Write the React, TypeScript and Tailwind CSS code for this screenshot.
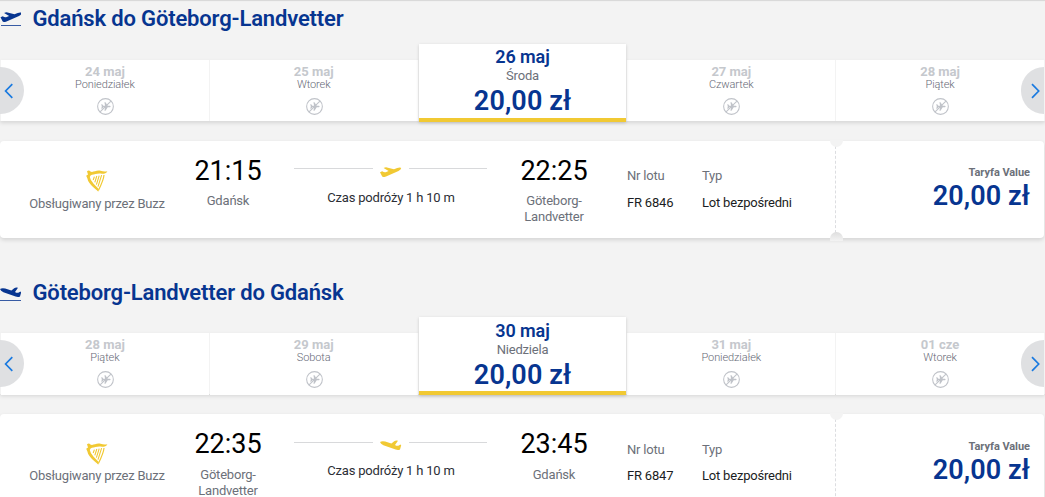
import React from 'react';

interface Day {
  date: string;
  weekday: string;
  price?: string;
}

interface Flight {
  departTime: string;
  departCity: string;
  arriveTime: string;
  arriveCity: string;
  number: string;
}

interface JourneyProps {
  title: string;
  inbound?: boolean;
  days: Day[];
  flight: Flight;
}

const outboundDays: Day[] = [
  { date: '24 maj', weekday: 'Poniedziałek' },
  { date: '25 maj', weekday: 'Wtorek' },
  { date: '26 maj', weekday: 'Środa', price: '20,00 zł' },
  { date: '27 maj', weekday: 'Czwartek' },
  { date: '28 maj', weekday: 'Piątek' },
];

const inboundDays: Day[] = [
  { date: '28 maj', weekday: 'Piątek' },
  { date: '29 maj', weekday: 'Sobota' },
  { date: '30 maj', weekday: 'Niedziela', price: '20,00 zł' },
  { date: '31 maj', weekday: 'Poniedziałek' },
  { date: '01 cze', weekday: 'Wtorek' },
];

const TakeoffPlane = () => (
  <path d="M0 5.2 L2.2 4.3 Q4.5 5.9 6.2 5 L8.6 4 L3.6 .9 Q5.6 0 7 .4 L14 2.3 L17.2 .9 Q20.6 -.1 21.2 1 Q21.2 2.4 18.5 3.9 L6 9.4 Q3 10.5 2.2 9.6 Z" />
);

const LandingPlane = () => (
  <path d="M0 2 Q2 .8 5.2 1.6 L11.4 3.5 L14.2 1.2 Q16 0 18 .8 L15 4.9 Q17.2 6.4 18.8 5.4 L20.4 4.6 L21.2 5.3 L20 9.4 Q18.4 10.4 15.6 9.6 L3.4 5.3 Q.6 4 0 2 Z" />
);

const RouteIcon = ({ inbound }: { inbound?: boolean }) => (
  <svg className="w-[21px] h-[16px] shrink-0 text-[#073590]" viewBox="0 0 21 16" fill="currentColor">
    {inbound ? <LandingPlane /> : <g transform="translate(.5 0)"><TakeoffPlane /></g>}
    <path d={inbound ? 'M0 13h21v1H0z' : 'M1 13h20v1H1z'} opacity=".8" />
  </svg>
);

const NoFlightIcon = () => (
  <svg className="w-[17px] h-[17px]" viewBox="0 0 16 16" fill="none" stroke="#c0c3c9">
    <circle cx="8" cy="8" r="7.4" />
    <path d="M2.9 13.1 13.1 2.9" />
    <path d="M4 5.9h.9l1.1 1.4h1.6L7 4h1l2.1 3.3h2.2q1.2.7 0 1.3H10.1L8 12H7l.6-3.4H6L4.9 10H4l.5-2z" fill="#c0c3c9" stroke="none" />
  </svg>
);

const HarpIcon = () => (
  <svg className="w-[22px] h-[22px]" viewBox="0 0 22 22" fill="none" stroke="#f1c933">
    <path d="M1 1.3 Q3-.3 4.4 1.5 C7 3 10-.2 14.5.8 Q18 1.8 21.4 1.2 Q20 3.8 16 3.8 C12 2.8 9 4.4 6 4.8 Q4.2 5.4 3.8 7 Q4.4 10.5 7.6 13.8 L12.5 18.8 L12.3 21.8 C9 18 2.5 14.6 1.4 8.6 L.2 5.8 L2 4.4 Z" fill="#f1c933" stroke="none" />
    <path d="M18 5 Q17.6 10 12.4 20.4" strokeWidth="1.2" />
    <path d="M8.4 6.6 7.2 10M10.8 6 8.8 12.4M13.2 5.6 10.4 14.6M15.6 5.2 12 16.6" strokeWidth="1.1" />
  </svg>
);

const ArrowButton = ({ side }: { side: 'left' | 'right' }) => (
  <button
    className={
      side === 'left'
        ? 'absolute left-0 top-[7px] w-6 h-[47px] rounded-r-full bg-[#dfe0e2] flex items-center'
        : 'absolute right-px top-[7px] w-[23px] h-[47px] rounded-l-full bg-[#dfe0e2] flex items-center justify-end'
    }
  >
    <svg className="w-[18px] h-4" viewBox="0 0 18 16" fill="none" stroke="#1a7ae0" strokeWidth="1.7">
      {side === 'left' ? <path d="M12.3 1.2 5.6 8l6.7 6.8" /> : <path d="M6 1.2 12.7 8 6 14.8" />}
    </svg>
  </button>
);

const DayCell = ({ day, inbound }: { day: Day; inbound?: boolean }) => {
  if (day.price) {
    return (
      <div className="relative flex-1 -mt-4 h-[78px] bg-white border-b-4 border-[#f1c933] shadow-[0_1px_3px_rgba(0,0,0,0.17)] flex flex-col items-center">
        <span className={inbound ? 'mt-1 text-[18px] leading-5 tracking-[-0.1px] font-semibold text-[#073590]' : 'mt-[3px] text-[18px] leading-5 tracking-[-0.1px] font-semibold text-[#073590]'}>{day.date}</span>
        <span className="mt-px text-[13px] leading-4 tracking-[-0.2px] text-[#6c7079]">{day.weekday}</span>
        <span className="mt-px text-[27px] leading-8 tracking-[0.1px] font-semibold text-[#073590]">{day.price}</span>
      </div>
    );
  }
  return (
    <div className={inbound ? 'flex-1 h-[62px] bg-white flex flex-col items-center' : 'flex-1 h-[61px] bg-white flex flex-col items-center'}>
      <span className="mt-[5px] text-[13px] leading-[14px] font-bold text-[#c5c8cd]">{day.date}</span>
      <span className="text-[11px] leading-3 tracking-[-0.1px] font-light text-[#666976]">{day.weekday}</span>
      <span className={inbound ? 'mt-[7px] ml-px' : 'mt-[6.5px] ml-px'}><NoFlightIcon /></span>
    </div>
  );
};

const Carousel = ({ days, inbound }: { days: Day[]; inbound?: boolean }) => (
  <div className="relative h-[61px] shadow-[0_2px_4px_rgba(0,0,0,0.12)]">
    <div className="flex h-full gap-px pl-px pr-px">
      {days.map((day) => <DayCell key={day.date} day={day} inbound={inbound} />)}
    </div>
    <ArrowButton side="left" />
    <ArrowButton side="right" />
  </div>
);

const Stop = ({ time, city, inbound }: { time: string; city: string; inbound?: boolean }) => (
  <div className="w-[94px] pt-[14px] flex flex-col items-center text-center">
    <span className="text-[27px] leading-8 text-black">{time}</span>
    <span className={inbound ? 'mt-[7px] text-[13px] leading-4 tracking-[-0.2px] whitespace-normal text-[#6c7079]' : 'mt-[6px] text-[13px] leading-4 tracking-[-0.2px] whitespace-normal text-[#6c7079]'}>{city}</span>
  </div>
);

const Ticket = ({ flight, inbound }: { flight: Flight; inbound?: boolean }) => (
  <div className="relative mt-5 mr-px h-[97px] rounded bg-white shadow-[0_2px_4px_rgba(0,0,0,0.13)] flex">
    <div className="w-[835px] flex">
      <div className="w-[181px] pl-[13px] pt-[29px] flex flex-col items-center">
        <HarpIcon />
        <span className={inbound ? 'mt-[3px] text-[13px] leading-4 tracking-[-0.22px] text-[#6c7079]' : 'mt-1 text-[13px] leading-4 tracking-[-0.22px] text-[#6c7079]'}>Obsługiwany przez Buzz</span>
      </div>
      <Stop time={flight.departTime} city={flight.departCity} inbound={inbound} />
      <div className="w-[232px] px-[19px] pt-[26px]">
        <div className="flex items-start">
          <span className={inbound ? 'mt-0.5 h-px w-[79px] bg-[#d8d9db]' : 'mt-px h-px w-[79px] bg-[#d8d9db]'} />
          <svg className="mx-[7px] w-[22px] h-[11px] text-[#f1c933]" viewBox="0 0 22 11" fill="currentColor">
            {inbound ? <LandingPlane /> : <TakeoffPlane />}
          </svg>
          <span className={inbound ? 'mt-0.5 h-px w-[78px] bg-[#d8d9db]' : 'mt-px h-px w-[78px] bg-[#d8d9db]'} />
        </div>
        <p className="mt-3 text-center text-[13px] leading-4 tracking-[-0.2px] text-[#2c2e35]">Czas podróży 1 h 10 m</p>
      </div>
      <Stop time={flight.arriveTime} city={flight.arriveCity} inbound={inbound} />
      <div className={inbound ? 'pl-[26px] pt-7 w-[101px] flex flex-col gap-[10px] text-[13px] leading-4 tracking-[-0.2px]' : 'pl-[26px] pt-[27px] w-[101px] flex flex-col gap-[11px] text-[13px] leading-4 tracking-[-0.2px]'}>
        <span className="text-[#6c7079]">Nr lotu</span>
        <span className="text-[#1b1d22]">{flight.number}</span>
      </div>
      <div className={inbound ? 'pt-7 flex flex-col gap-[10px] text-[13px] leading-4 tracking-[-0.2px]' : 'pt-[27px] flex flex-col gap-[11px] text-[13px] leading-4 tracking-[-0.2px]'}>
        <span className="text-[#6c7079]">Typ</span>
        <span className="text-[#1b1d22]">Lot bezpośredni</span>
      </div>
    </div>
    <div className={inbound ? 'flex-1 border-l border-dashed border-[#dcdde0] pr-[14px] pt-[26px] flex flex-col items-end' : 'flex-1 border-l border-dashed border-[#dcdde0] pr-[14px] pt-[25px] flex flex-col items-end'}>
      <span className="text-[11px] leading-[14px] tracking-[-0.05px] font-bold text-[#6c7079]">Taryfa Value</span>
      <span className="text-[27px] leading-8 tracking-[0.1px] font-semibold text-[#073590]">20,00 zł</span>
    </div>
    {/* punched notches over the perforation */}
    <span className="absolute left-[830px] -top-px w-[13px] h-[7px] rounded-b-full bg-[#f3f3f3]" />
    <span className="absolute left-[830px] -bottom-[3px] w-[13px] h-[9px] rounded-t-full bg-linear-to-b from-[#dedede] to-[#f3f3f3]" />
  </div>
);

const Journey: React.FC<JourneyProps> = ({ title, inbound, days, flight }) => (
  <section className="h-[273px] shrink-0">
    <header className={inbound ? 'h-[60px] pt-[7px] flex items-start' : 'h-[60px] pt-[6px] flex items-start'}>
      <span className={inbound ? 'mt-[7px] mr-[11.5px]' : 'mt-[6px] mr-[11.5px]'}><RouteIcon inbound={inbound} /></span>
      <h2 className="text-[22px] leading-[26px] tracking-[-0.16px] font-semibold text-[#073590]">{title}</h2>
    </header>
    <Carousel days={days} inbound={inbound} />
    <Ticket flight={flight} inbound={inbound} />
  </section>
);

export default function App() {
  return (
    <main className="w-[1045px] h-[497px] overflow-hidden bg-[#f3f3f3] font-['Roboto',sans-serif] whitespace-nowrap shadow-[inset_0_2px_1px_-1px_rgba(0,0,0,0.12)]">
      <Journey
        title="Gdańsk do Göteborg-Landvetter"
        days={outboundDays}
        flight={{
          departTime: '21:15',
          departCity: 'Gdańsk',
          arriveTime: '22:25',
          arriveCity: 'Göteborg-Landvetter',
          number: 'FR 6846',
        }}
      />
      <Journey
        title="Göteborg-Landvetter do Gdańsk"
        inbound
        days={inboundDays}
        flight={{
          departTime: '22:35',
          departCity: 'Göteborg-Landvetter',
          arriveTime: '23:45',
          arriveCity: 'Gdańsk',
          number: 'FR 6847',
        }}
      />
    </main>
  );
}
